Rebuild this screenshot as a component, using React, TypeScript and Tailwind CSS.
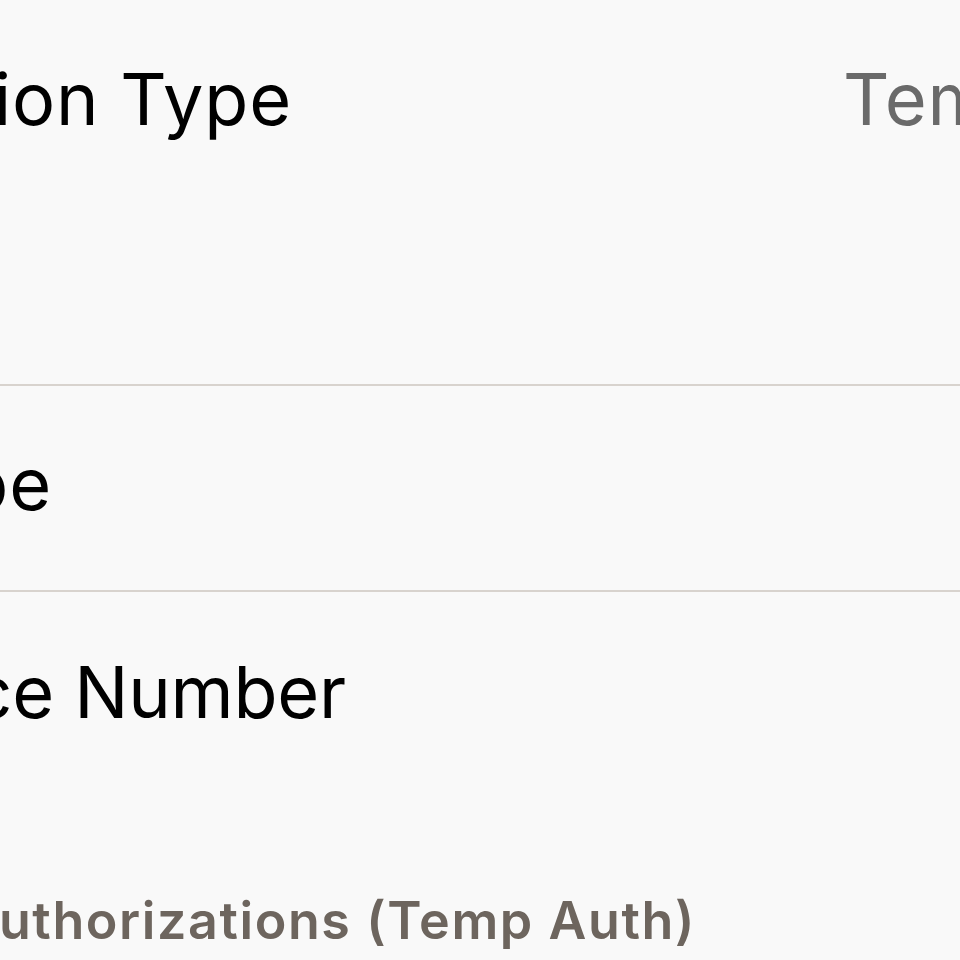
const font = { fontFamily: "Inter, 'Noto Sans', sans-serif" };

const rows = [
  { label: "Authorization Type", value: "Temporary", right: 292, height: "h-[384px]", pad: "pt-[63px]", track: "tracking-[0.8px]" },
  { label: "Card Type", value: "", right: 52, height: "h-[204px]", pad: "pt-[62px]", track: "tracking-[0.8px]" },
  { label: "Device Number", value: "", right: 346, height: "h-[210px]", pad: "pt-[64px]", track: "tracking-[-0.2px]" },
];

const App = () => {
  return (
    <div className="w-[960px] h-[960px] overflow-hidden bg-[#f9f9f9]" style={font}>
      {rows.map((row, index) => (
        <div key={index}>
          <div className={`${row.height} ${row.pad} relative`}>
            <div className="flex items-start">
              <div
                className={`flex justify-end whitespace-nowrap text-[72px] leading-[72px] text-black ${row.track}`}
                style={{ width: row.right }}
              >
                {row.label}
              </div>
              {row.value && (
                <div className="ml-[551px] whitespace-nowrap text-[72px] leading-[72px] text-[#6a6a6a] tracking-[0.8px]">
                  {row.value}
                </div>
              )}
            </div>
          </div>
          {index < 2 && <div className="h-[2px] bg-[#d8d3ce]" />}
        </div>
      ))}
      {/* section header */}
      <div className="pt-[93px] flex">
        <div className="w-[696px] flex justify-end whitespace-nowrap text-[52px] leading-[52px] font-semibold text-[#6d655e] tracking-[1.6px]">
          Temporary Authorizations (Temp Auth)
        </div>
      </div>
    </div>
  );
};

export default App;
